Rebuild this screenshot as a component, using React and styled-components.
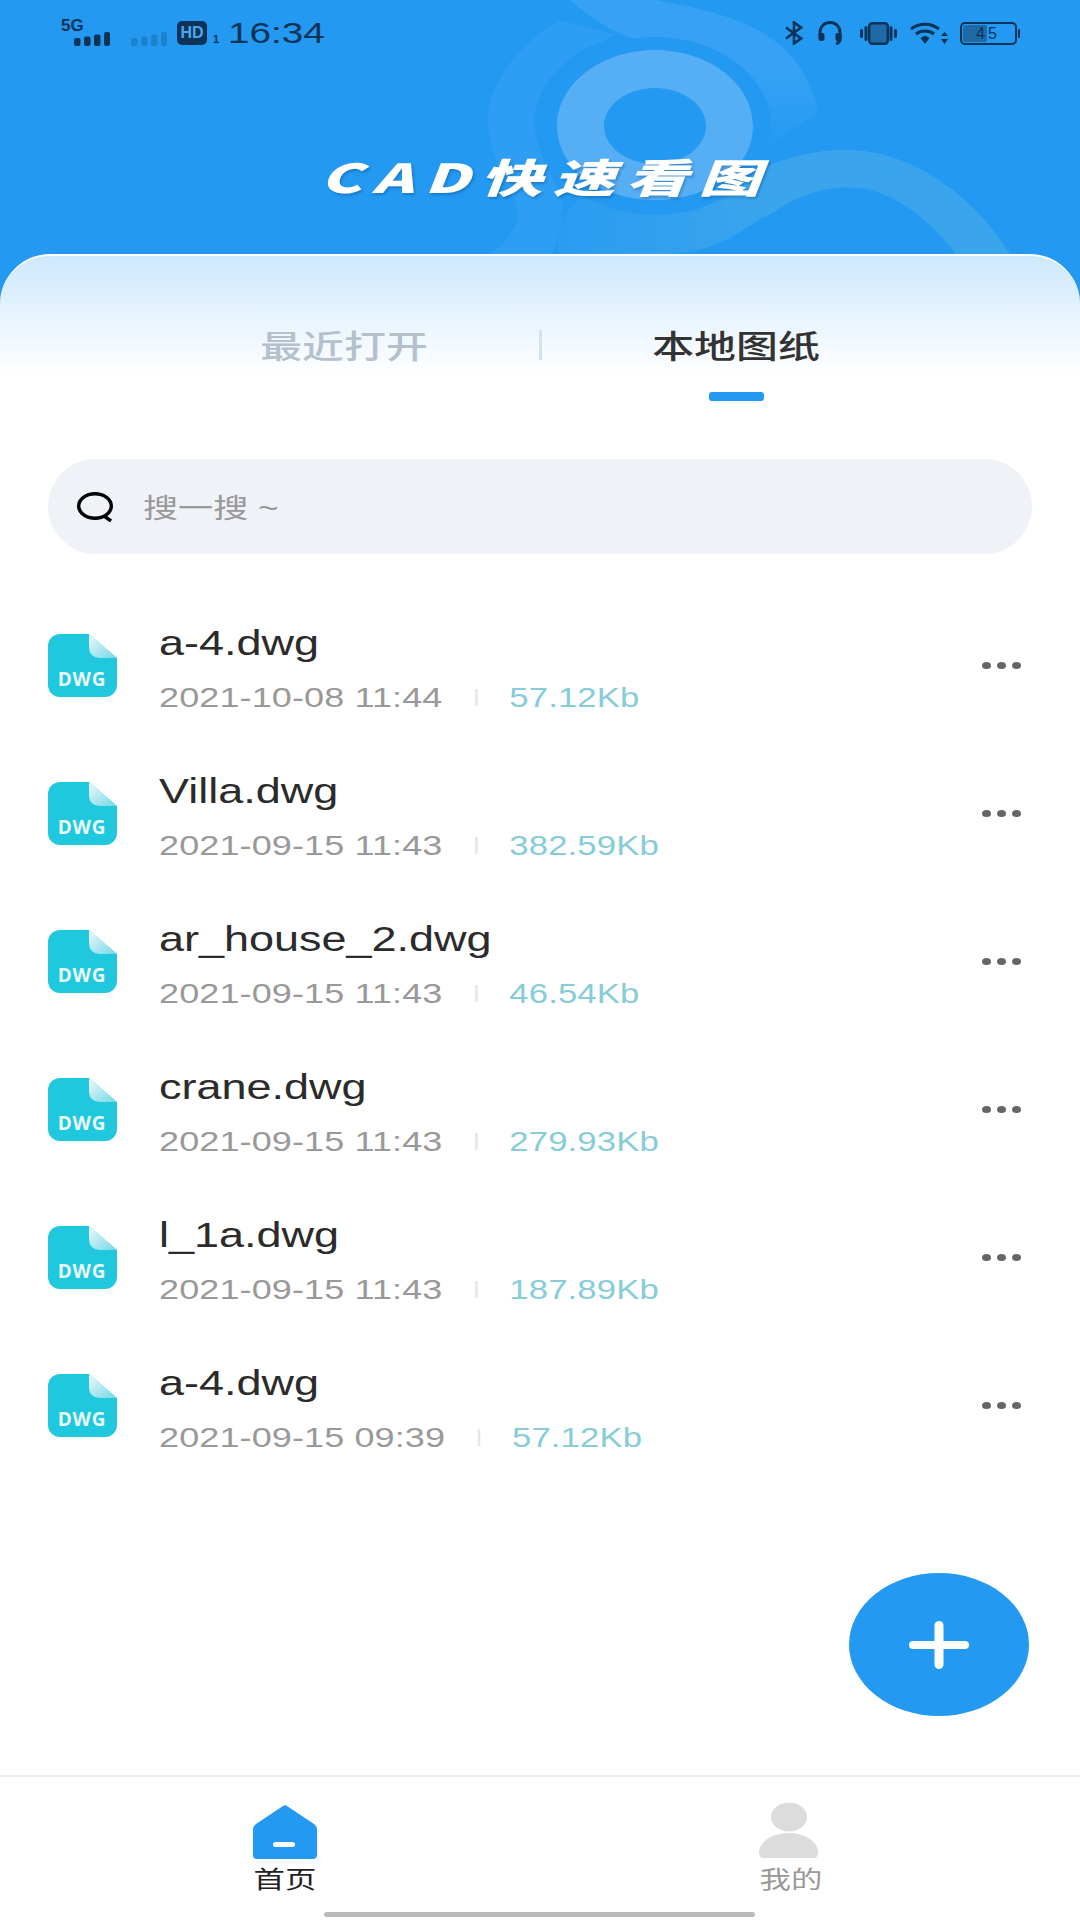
import React from 'react'
import styled, { createGlobalStyle } from 'styled-components'

const CJK = '"Liberation Sans", "Noto Sans CJK SC", sans-serif'
const BLUE = '#2399f1'
const DARK = '#0a3358'

const files = [
  { name: 'a-4.dwg', date: '2021-10-08 11:44', size: '57.12Kb' },
  { name: 'Villa.dwg', date: '2021-09-15 11:43', size: '382.59Kb' },
  { name: 'ar_house_2.dwg', date: '2021-09-15 11:43', size: '46.54Kb' },
  { name: 'crane.dwg', date: '2021-09-15 11:43', size: '279.93Kb' },
  { name: 'l_1a.dwg', date: '2021-09-15 11:43', size: '187.89Kb' },
  { name: 'a-4.dwg', date: '2021-09-15 09:39', size: '57.12Kb' },
]

function Bars({ faded }) {
  return (
    <svg width="36" height="14" viewBox="0 0 36 14" opacity={faded ? 0.22 : 1}>
      <rect x="0" y="6" width="6.5" height="8" rx="2" fill={DARK} />
      <rect x="10" y="4.5" width="6.5" height="9.5" rx="2" fill={DARK} />
      <rect x="20" y="2.5" width="6.5" height="11.5" rx="2" fill={DARK} />
      <rect x="30" y="0" width="6" height="14" rx="2" fill={DARK} />
    </svg>
  )
}

function Bluetooth() {
  return (
    <svg width="18" height="24" viewBox="0 0 18 24" fill="none" stroke={DARK} strokeWidth="2.6">
      <path d="M1 6.5 L16 17.5 L9 22.5 V1.5 L16 6.5 L1 17.5" />
    </svg>
  )
}

function Headphones() {
  return (
    <svg width="24" height="24" viewBox="0 0 24 24" fill="none">
      <path d="M2 15 V11.5 C2 5.5 6.5 1.5 12 1.5 C17.5 1.5 22 5.5 22 11.5 V18 C22 20.5 20.5 22 18 23" stroke={DARK} strokeWidth="3" />
      <rect x="0.5" y="12" width="6" height="8" rx="2" fill={DARK} />
      <rect x="17.5" y="12" width="6" height="8" rx="2" fill={DARK} />
    </svg>
  )
}

function Vibrate() {
  return (
    <svg width="37" height="23" viewBox="0 0 37 23" fill="none">
      <rect x="9.2" y="1.2" width="18.6" height="20.6" rx="3" fill="#1f6aa6" stroke={DARK} strokeWidth="2.4" />
      <rect x="0" y="7" width="3" height="9" rx="1.5" fill={DARK} />
      <rect x="4.5" y="4" width="3" height="15" rx="1.5" fill={DARK} />
      <rect x="29.5" y="4" width="3" height="15" rx="1.5" fill={DARK} />
      <rect x="34" y="7" width="3" height="9" rx="1.5" fill={DARK} />
    </svg>
  )
}

function Wifi() {
  return (
    <svg width="38" height="23" viewBox="0 0 38 23" fill="none">
      <path d="M1 7 C9 0.5 21 0.5 29 7" stroke={DARK} strokeWidth="3" />
      <path d="M6 12 C11 8 19 8 24 12" stroke={DARK} strokeWidth="3" />
      <path d="M10.5 16 L15 13.5 L19.5 16 L15 22 Z" fill={DARK} />
      <path d="M31 14 H38 L34.5 10 Z M31 17 H38 L34.5 22 Z" fill={DARK} />
    </svg>
  )
}

function FileIcon() {
  return (
    <svg width="69" height="63" viewBox="0 0 69 63">
      <defs>
        <linearGradient id="fold" x1="0.9" y1="0.9" x2="0.2" y2="0.1">
          <stop offset="0" stopColor="#7fdbe8" />
          <stop offset="1" stopColor="#dff5f8" />
        </linearGradient>
      </defs>
      <path d="M12 0 H41 L69 24 V51 A12 12 0 0 1 57 63 H12 A12 12 0 0 1 0 51 V12 A12 12 0 0 1 12 0 Z" fill="#1fc8dc" />
      <path d="M41 0 L69 24 H51 A10 10 0 0 1 41 14 Z" fill="url(#fold)" />
      <text x="34" y="52" textAnchor="middle" fontFamily="Open Sans" fontWeight="700" fontSize="19" letterSpacing="0.8" fill="#eafafc">DWG</text>
    </svg>
  )
}

function HeaderArt() {
  return (
    <Art width="1080" height="314" viewBox="0 0 1080 314">
      <defs>
        <linearGradient id="topBand" x1="0" y1="0.4" x2="0" y2="1">
          <stop offset="0" stopColor="#37a2f5" />
          <stop offset="1" stopColor={BLUE} />
        </linearGradient>
        <linearGradient id="lobe" x1="0" y1="0" x2="1" y2="0">
          <stop offset="0" stopColor="#2a9cf2" />
          <stop offset="0.4" stopColor="#38a3ee" />
          <stop offset="1" stopColor="#3aa5ec" />
        </linearGradient>
      </defs>
      <path d="M491 254 C510 238 522 222 516 205 C512 190 490 160 488 123 C487 90 510 50 559 20 L615 34 L602 42 C575 48 538 80 534 117 C533 150 562 190 563 207 C563 225 557 240 552 254 Z" fill="#2d9ef3" />
      <path d="M570 0 H656 C700 8 760 20 790 55 C808 75 815 95 818 113 L752 157 L650 42 C620 38 595 22 570 0 Z" fill="url(#topBand)" />
      <path d="M588 190 C570 205 552 225 560 254 H660 C690 254 710 248 730 238 C770 215 800 187 845 187 C890 187 925 215 956 254 H1010 C980 205 920 150 845 150 C810 150 780 160 750 175 Z" fill="url(#lobe)" />
      <ellipse cx="655" cy="126" rx="116" ry="89" fill={BLUE} />
      <path d="M756 170 C785 158 815 150 845 150 C870 150 890 156 905 164 L860 188 C820 184 790 200 766 217 L720 205 Z" fill="#3aa5ec" />
      <path fillRule="evenodd" d="M655 50 C709 50 753 84 753 126 C753 168 709 200 655 200 C601 200 557 168 557 126 C557 84 601 50 655 50 Z M655 88 C627 88 604 105 604 126 C604 147 627 164 655 164 C683 164 706 147 706 126 C706 105 683 88 655 88 Z" fill="#56aef5" />
    </Art>
  )
}

function App() {
  return (
    <>
      <GlobalStyle />
      <Page>
        <Header>
          <HeaderArt />
          <StatusBar>
            <StatusGroup>
              <Network>
                <NetworkLabel>5G</NetworkLabel>
                <Bars />
              </Network>
              <FadedBars>
                <Bars faded />
              </FadedBars>
              <HdBadge>HD</HdBadge>
              <SimIndex>1</SimIndex>
              <Clock>16:34</Clock>
            </StatusGroup>
            <StatusGroup>
              <StatusIcon>
                <Bluetooth />
              </StatusIcon>
              <StatusIcon $left={15}>
                <Headphones />
              </StatusIcon>
              <StatusIcon $left={18}>
                <Vibrate />
              </StatusIcon>
              <StatusIcon $left={13}>
                <Wifi />
              </StatusIcon>
              <Battery>
                <BatteryLevel />
                <BatteryText>45</BatteryText>
                <BatteryCap />
              </Battery>
            </StatusGroup>
          </StatusBar>
          <Title>
            <TitleText>CAD快速看图</TitleText>
          </Title>
        </Header>

        <Card>
          <Tabs>
            <Tab>
              <TabLabel>最近打开</TabLabel>
              <TabMark />
            </Tab>
            <TabDivider />
            <Tab>
              <TabLabel $active>本地图纸</TabLabel>
              <TabMark $active />
            </Tab>
          </Tabs>

          <SearchBar>
            <SearchIcon width="38" height="30" viewBox="0 0 38 30" fill="none" stroke="#000" strokeWidth="3.4">
              <ellipse cx="18" cy="14" rx="16.3" ry="12.3" />
              <path d="M27 24 L34 29" />
            </SearchIcon>
            <SearchText>搜一搜 ~</SearchText>
          </SearchBar>

          <FileList>
            {files.map((file, i) => (
              <FileRow key={i}>
                <FileIcon />
                <FileText>
                  <FileName>{file.name}</FileName>
                  <FileMeta>
                    <span>{file.date}</span>
                    <MetaDivider />
                    <FileSize>{file.size}</FileSize>
                  </FileMeta>
                </FileText>
                <More>
                  <Dot />
                  <Dot />
                  <Dot />
                </More>
              </FileRow>
            ))}
          </FileList>

          <AddButton>
            <svg width="60" height="48" viewBox="0 0 60 48">
              <rect x="0" y="20" width="60" height="8" rx="4" fill="#fff" />
              <rect x="25.5" y="0" width="9" height="48" rx="4.5" fill="#fff" />
            </svg>
          </AddButton>
        </Card>

        <BottomNav>
          <NavItem>
            <NavIcon>
              <svg width="64" height="54" viewBox="0 0 64 54">
                <path d="M30 1 Q32 -0.5 34 1 L61 19 Q64 21 64 24 V50 Q64 54 60 54 H4 Q0 54 0 50 V24 Q0 21 3 19 Z" fill={BLUE} />
                <rect x="20" y="37" width="22" height="5" rx="2.5" fill="#fff" />
              </svg>
            </NavIcon>
            <NavLabel $active>首页</NavLabel>
          </NavItem>
          <NavItem>
            <NavIcon>
              <svg width="59" height="56" viewBox="0 0 59 56">
                <ellipse cx="30" cy="14" rx="18" ry="14.5" fill="#dcdcdc" />
                <path d="M0 50 C0 38 14 30 30 30 C45 30 59 38 59 50 Q59 55 54 55 H5 Q0 55 0 50 Z" fill="#dcdcdc" />
              </svg>
            </NavIcon>
            <NavLabel>我的</NavLabel>
          </NavItem>
          <HomeIndicator />
        </BottomNav>
      </Page>
    </>
  )
}

const GlobalStyle = createGlobalStyle`
html, body {
  margin: 0;
  padding: 0;
  background: #fff;
}
`
const Page = styled.div`
position: relative;
width: 1080px;
height: 1920px;
overflow: hidden;
display: flex;
flex-direction: column;
font-family: ${CJK};
background: #fff;
`
const Header = styled.header`
position: relative;
height: 314px;
flex-shrink: 0;
background: ${BLUE};
`
const Art = styled.svg`
position: absolute;
top: 0;
left: 0;
`
const StatusBar = styled.div`
position: relative;
display: flex;
justify-content: space-between;
align-items: flex-start;
padding: 20px 63px 0 61px;
`
const StatusGroup = styled.div`
display: flex;
align-items: center;
height: 26px;
`
const StatusIcon = styled.span`
display: flex;
margin-left: ${p => p.$left || 0}px;
`
const Network = styled.div`
position: relative;
width: 49px;
height: 26px;
display: flex;
align-items: flex-end;
justify-content: flex-end;
`
const NetworkLabel = styled.span`
position: absolute;
left: 0;
top: -4px;
font-size: 17px;
font-weight: 700;
color: ${DARK};
`
const FadedBars = styled.div`
display: flex;
align-items: flex-end;
height: 26px;
margin-left: 21px;
`
const HdBadge = styled.div`
width: 30px;
height: 24px;
margin-left: 10px;
border-radius: 5px;
background: ${DARK};
color: #4ba9f0;
font-size: 16px;
font-weight: 700;
text-align: center;
line-height: 24px;
`
const SimIndex = styled.span`
width: 5px;
margin: 12px 0 0 6px;
font-size: 11px;
font-weight: 700;
color: ${DARK};
`
const Clock = styled.span`
display: inline-block;
margin-left: 10px;
font-size: 30px;
line-height: 26px;
color: ${DARK};
transform: scaleX(1.29);
transform-origin: left;
`
const Battery = styled.div`
position: relative;
box-sizing: border-box;
width: 57px;
height: 23px;
margin-left: 12px;
border: 2px solid ${DARK};
border-radius: 5px;
`
const BatteryLevel = styled.div`
position: absolute;
left: 1px;
top: 1px;
bottom: 1px;
width: 24px;
background: #1f6aa6;
border-radius: 2px;
`
const BatteryText = styled.span`
position: absolute;
left: 14px;
top: 0;
font-size: 16px;
line-height: 19px;
letter-spacing: 3px;
color: ${DARK};
`
const BatteryCap = styled.div`
position: absolute;
right: -5px;
top: 5px;
width: 2px;
height: 9px;
border-radius: 1px;
background: ${DARK};
`
const Title = styled.div`
position: relative;
margin-top: 106px;
padding-left: 320px;
`
const TitleText = styled.h1`
display: inline-block;
margin: 0;
font-family: "Noto Sans CJK SC", sans-serif;
font-size: 40px;
line-height: 48px;
font-weight: 900;
font-style: italic;
letter-spacing: 7px;
color: #fff;
text-shadow: 1px 2px 2px rgba(10, 70, 130, 0.35);
white-space: nowrap;
transform: scaleX(1.55);
transform-origin: left;
`
const Card = styled.main`
position: relative;
flex: 1;
margin-top: -60px;
border-top: 2px solid #fff;
border-radius: 50px 50px 0 0;
background: linear-gradient(#cde8fe 0, #fff 118px);
`
const Tabs = styled.div`
display: flex;
justify-content: center;
padding-top: 66px;
`
const Tab = styled.div`
width: 389px;
display: flex;
flex-direction: column;
align-items: center;
`
const TabLabel = styled.span`
font-family: "Noto Sans CJK SC", sans-serif;
font-size: 32px;
line-height: 44px;
font-weight: 500;
color: ${p => (p.$active ? '#333' : '#b4c1cd')};
transform: scaleX(1.31);
`
const TabMark = styled.div`
width: 55px;
height: 9px;
margin-top: 26px;
border-radius: 3px;
background: ${p => (p.$active ? BLUE : 'transparent')};
`
const TabDivider = styled.div`
width: 3px;
height: 30px;
margin-top: 8px;
background: #d3e3ee;
`
const SearchBar = styled.div`
display: flex;
align-items: center;
height: 95px;
margin: 58px 48px 0;
padding-left: 29px;
border-radius: 48px;
background: #eff2f7;
`
const SearchIcon = styled.svg`
flex-shrink: 0;
`
const SearchText = styled.span`
margin-left: 28px;
font-size: 27px;
color: #999;
transform: scaleX(1.3);
transform-origin: left;
`
const FileList = styled.ul`
list-style: none;
margin: 37px 59px 0 48px;
padding: 0;
`
const FileRow = styled.li`
display: flex;
align-items: center;
height: 148px;
`
const FileText = styled.div`
flex: 1;
margin-left: 42px;
padding-top: 5px;
transform: scaleX(1.285);
transform-origin: left;
`
const FileName = styled.div`
font-size: 35px;
line-height: 46px;
color: #2b2b2b;
`
const FileMeta = styled.div`
display: flex;
align-items: center;
margin-top: 14px;
font-size: 28px;
line-height: 36px;
letter-spacing: 0.1px;
color: #999;
`
const MetaDivider = styled.i`
width: 2px;
height: 17px;
margin: 0 25px;
background: #e6e6e6;
`
const FileSize = styled.span`
font-size: 27px;
color: #86cdd8;
`
const More = styled.div`
display: flex;
gap: 6px;
`
const Dot = styled.span`
width: 9px;
height: 7px;
border-radius: 50%;
background: #666;
`
const AddButton = styled.button`
position: absolute;
right: 51px;
top: 1317px;
display: flex;
align-items: center;
justify-content: center;
width: 180px;
height: 143px;
padding: 0;
border: none;
border-radius: 50%;
background: ${BLUE};
`
const BottomNav = styled.nav`
position: relative;
display: flex;
justify-content: space-between;
flex-shrink: 0;
box-sizing: border-box;
height: 145px;
padding: 26px 257px 0 253px;
border-top: 2px solid #eee;
background: #fff;
`
const NavItem = styled.div`
display: flex;
flex-direction: column;
align-items: center;
width: 64px;
`
const NavIcon = styled.div`
align-self: flex-start;
height: 56px;
display: flex;
align-items: flex-end;
`
const NavLabel = styled.span`
margin-top: 6px;
white-space: nowrap;
font-size: 24px;
line-height: 30px;
color: ${p => (p.$active ? '#222' : '#999')};
transform: scaleX(1.31);
`
const HomeIndicator = styled.div`
position: absolute;
left: 324px;
bottom: 3px;
width: 431px;
height: 5px;
border-radius: 3px;
background: #bbb;
`

export default App
